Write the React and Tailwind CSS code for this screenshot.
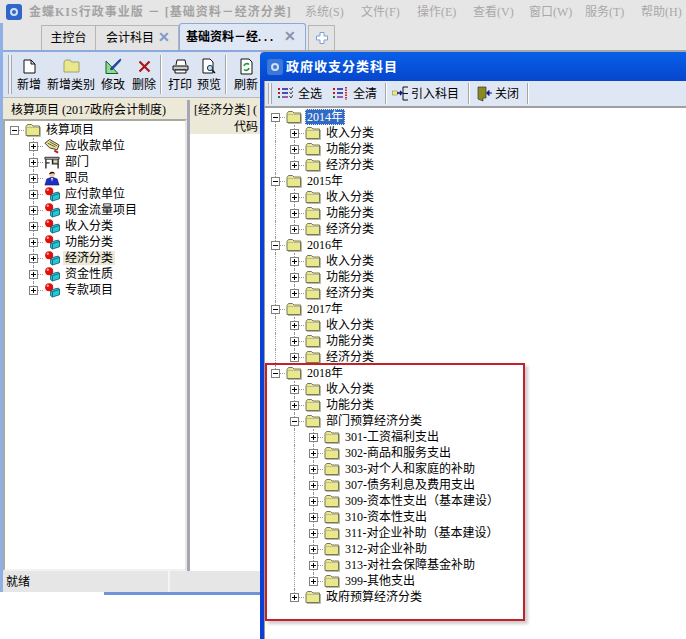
import React from "react";

const Folder = () => (
  <svg width="16" height="14" viewBox="0 0 16 14" className="shrink-0">
    <path d="M1 3.5 L2.5 1.5 H6.5 L8 3 H14.5 V12.5 H1 Z" fill="#e9e98c" stroke="#77775a" />
    <path d="M2 4.5 H14 M15.5 4 V13.5 H2" fill="none" stroke="#b9b9a8" />
  </svg>
);

const Ball = () => (
  <svg width="16" height="16" viewBox="0 0 17 16" className="shrink-0">
    <path d="M7 8 L15 6 L16.5 7 V13 L9 15.5 L7 14 Z" fill="#22c8dc" stroke="#0b4550" strokeWidth="0.8" />
    <path d="M7 8.5 L9 10 L16 7.5 M9 10 V15" fill="none" stroke="#0b4550" strokeWidth="0.7" />
    <circle cx="5.5" cy="5" r="4.3" fill="#e01010" />
    <circle cx="4" cy="3.5" r="1.3" fill="#ff9a9a" />
  </svg>
);

const Hand = () => (
  <svg width="16" height="16" viewBox="0 0 17 16" className="shrink-0">
    <path d="M1 5 L6 1 L16 7 L14 12 L6 10 Z" fill="#efe08c" stroke="#333" />
    <path d="M4 5 L12 9 M6 3.5 L14 8" stroke="#555" fill="none" />
    <path d="M11 13 L15 15" stroke="#c01818" strokeWidth="2" />
  </svg>
);

const Desk = () => (
  <svg width="16" height="16" viewBox="0 0 17 16" className="shrink-0">
    <path d="M1 3 H16 V5 H1 Z" fill="#d8d8d8" stroke="#222" />
    <path d="M2 5 V15 M15 5 V15 M9 5 V10 H15 M2 9 H6" fill="none" stroke="#222" strokeWidth="1.4" />
    <rect x="10" y="6" width="4" height="3" fill="#f1e9a8" stroke="#555" strokeWidth="0.5" />
  </svg>
);

const Person = () => (
  <svg width="16" height="16" viewBox="0 0 17 16" className="shrink-0">
    <path d="M1 15.5 L3 9 L7 7.5 H10 L14 9 L16 15.5 Z" fill="#1c2fc0" stroke="#0a1260" strokeWidth="0.6" />
    <path d="M7.5 8 L8.5 12 L9.5 8 Z" fill="#fff" />
    <circle cx="8.5" cy="4" r="3" fill="#f2c9a0" />
    <path d="M5.5 4 C5.5 0.5 11.5 0.5 11.5 3.5 L9 3 Z" fill="#111" />
  </svg>
);

const icons = { folder: <Folder />, ball: <Ball />, hand: <Hand />, desk: <Desk />, person: <Person /> };

// one tree line: guide columns, expander box, icon, label
const Row = ({ guides = [], box = "+", line = "full", icon = "folder", label, selected, hover }) => (
  <div className="flex h-4 items-center whitespace-nowrap">
    {guides.map((g, i) => (
      <div key={i} className="flex h-4 w-[19px] shrink-0 justify-center">
        {g && <div className="h-full border-l border-dotted border-[#999]" />}
      </div>
    ))}
    <div className="relative flex h-4 w-[19px] shrink-0 items-center justify-center">
      {line === "full" && <div className="absolute left-[9px] top-0 h-4 border-l border-dotted border-[#999]" />}
      {line === "first" && <div className="absolute left-[9px] top-2 h-2 border-l border-dotted border-[#999]" />}
      {line === "last" && <div className="absolute left-[9px] top-0 h-2 border-l border-dotted border-[#999]" />}
      <div className="absolute left-[9px] top-2 w-[10px] border-t border-dotted border-[#999]" />
      <div className="relative flex h-[9px] w-[9px] items-center justify-center border border-[#808080] bg-white">
        <div className="absolute h-px w-[5px] bg-black" />
        {box === "+" && <div className="absolute h-[5px] w-px bg-black" />}
      </div>
    </div>
    <div className="ml-px relative">{icons[icon]}</div>
    <span
      className={
        "text-[12px] leading-[14px] " +
        (selected
          ? "ml-[3px] border border-dotted border-[#dfe6f4] bg-[#316ac5] px-px text-white"
          : hover
          ? "ml-[3px] bg-[#ece9d8] px-[2px] text-black"
          : "ml-[5px] text-black")
      }
    >
      {label}
    </span>
  </div>
);

const ToolBtn = ({ label, className, children }) => (
  <div className={"flex flex-col items-center " + className}>
    <div className="flex h-[22px] items-center justify-center">{children}</div>
    <span className="text-[12px] leading-[16px] text-black whitespace-nowrap">{label}</span>
  </div>
);

const Grip = () => (
  <div className="h-full w-[4px] shrink-0 border-x border-[#a8a8a8] bg-[#eef1f8]" />
);

const Divider = ({ className = "" }) => (
  <div className={"w-[2px] shrink-0 self-stretch border-l border-r border-l-[#a5a5a5] border-r-white " + className} />
);

const ListIcon = ({ clear }) => (
  <svg width="15" height="13" viewBox="0 0 15 13">
    <path d="M0 2 H2 M0 6 H2" stroke="#c01818" strokeWidth="2" />
    <path d="M0 10 H2" stroke="#108030" strokeWidth="2" />
    <path d="M4 2 H10 M4 6 H10" stroke="#1a1a90" strokeWidth="1.4" />
    <path d="M4 10 H10" stroke="#802090" strokeWidth="1.4" />
    {clear ? (
      <path d="M13 0 V13" stroke="#c03030" strokeWidth="2" strokeDasharray="1.5 1" />
    ) : (
      <path d="M11.5 1 L13 3 L15 0 M11.5 5 L13 7 L15 4 M11.5 9 L13 11 L15 8" fill="none" stroke="#444" />
    )}
  </svg>
);

const leftTree = [
  ["hand", "应收款单位"],
  ["desk", "部门"],
  ["person", "职员"],
  ["ball", "应付款单位"],
  ["ball", "现金流量项目"],
  ["ball", "收入分类"],
  ["ball", "功能分类"],
  ["ball", "经济分类"],
  ["ball", "资金性质"],
  ["ball", "专款项目"],
];

const years = ["2014年", "2015年", "2016年", "2017年"];
const subs = ["收入分类", "功能分类", "经济分类"];
const budget = [
  "301-工资福利支出",
  "302-商品和服务支出",
  "303-对个人和家庭的补助",
  "307-债务利息及费用支出",
  "309-资本性支出（基本建设）",
  "310-资本性支出",
  "311-对企业补助（基本建设）",
  "312-对企业补助",
  "313-对社会保障基金补助",
  "399-其他支出",
];
const menus = ["系统(S)", "文件(F)", "操作(E)", "查看(V)", "窗口(W)", "服务(T)", "帮助(H)"];

export default function App() {
  return (
    <div className="relative h-[639px] w-[686px] overflow-hidden bg-white font-['Liberation_Serif','Noto_Sans_CJK_SC',serif]">
      {/* main window */}
      <div className="flex h-[592px] flex-col">
        <div className="flex h-[23px] shrink-0 items-center bg-[#e6e6e6] pl-[6px]">
          <div className="flex h-4 w-4 shrink-0 items-center justify-center rounded-[3px] bg-[#2f66c8]">
            <div className="h-2 w-2 rounded-full border-2 border-[#cfe0f5]" />
          </div>
          <span className="ml-[7px] w-[276px] shrink-0 whitespace-nowrap text-[12px] font-bold tracking-[1px] text-[#a3a3a3]">
            金蝶KIS行政事业版 － [基础资料－经济分类]
          </span>
          {menus.map((m) => (
            <span key={m} className="w-[56px] shrink-0 whitespace-nowrap text-[12px] text-[#a9a9a9]">
              {m}
            </span>
          ))}
        </div>

        <div className="flex min-h-0 flex-1 flex-col border-l-[3px] border-[#8fb0e4]">
          {/* tabs */}
          <div className="flex h-[29px] shrink-0 items-end border-b-[2px] border-[#8aa9dd] bg-[#e6e6e6] pl-[38px]">
            <div className="flex h-[25px] w-[55px] items-center justify-center border border-b-0 border-[#b5b5b5] bg-[#e4e4e4] text-[12px]">
              主控台
            </div>
            <div className="flex h-[25px] w-[83px] items-center border border-b-0 border-l-0 border-[#b5b5b5] bg-[#e4e4e4] pl-[10px] text-[12px]">
              会计科目
              <span className="ml-[4px] text-[14px] font-bold leading-none text-[#7d9ac8]">✕</span>
            </div>
            <div className="flex h-[27px] w-[127px] items-center rounded-t-[3px] border border-b-0 border-[#8aa9dd] bg-[#dfe6f4] pl-[6px] text-[12px] font-bold">
              基础资料－经. . .
              <span className="ml-[11px] text-[14px] leading-none text-[#8a93a8]">✕</span>
            </div>
            <div className="ml-[2px] flex h-[25px] w-[27px] items-center justify-center border border-b-0 border-[#b5b5b5] bg-[#e4e4e4]">
              <svg width="12" height="12" viewBox="0 0 12 12">
                <path d="M4 0.5 H8 V4 H11.5 V8 H8 V11.5 H4 V8 H0.5 V4 H4 Z" fill="#fff" stroke="#7f9fd4" />
              </svg>
            </div>
          </div>

          {/* toolbar */}
          <div className="flex h-[46px] shrink-0 items-stretch border-b border-[#b9b9b9] bg-[#dde5f3] py-[3px] pl-[5px]">
            <Grip />
            <ToolBtn label="新增" className="ml-[5px]">
              <svg width="13" height="15" viewBox="0 0 13 15">
                <path d="M1 1 H8 L12 5 V14 H1 Z M8 1 V5 H12" fill="#fff" stroke="#111" />
              </svg>
            </ToolBtn>
            <ToolBtn label="新增类别" className="ml-[6px]">
              <svg width="17" height="14" viewBox="0 0 17 14">
                <path d="M1 3 L2.5 1 H7 L8.5 3 H16 V13 H1 Z" fill="#e9e98c" stroke="#a0a070" />
              </svg>
            </ToolBtn>
            <ToolBtn label="修改" className="ml-[6px]">
              <svg width="17" height="17" viewBox="0 0 17 17">
                <path d="M1 15.5 V3 L13 15.5 Z" fill="#8fdc8f" stroke="#135c2c" />
                <path d="M5 11 L14 2 L16 1 L15 3.5 L7 12 Z" fill="#1a4fb0" stroke="#0a2a70" strokeWidth="0.6" />
              </svg>
            </ToolBtn>
            <ToolBtn label="删除" className="ml-[7px]">
              <svg width="13" height="13" viewBox="0 0 13 13">
                <path d="M1.5 1.5 L11.5 11.5 M11.5 1.5 L1.5 11.5" stroke="#a81818" strokeWidth="2.2" />
              </svg>
            </ToolBtn>
            <Divider className="ml-[4px]" />
            <ToolBtn label="打印" className="ml-[6px]">
              <svg width="17" height="15" viewBox="0 0 17 15">
                <path d="M4 6 L5 1 H13 L14 6" fill="#fff" stroke="#111" />
                <path d="M1 7 H16 V11 H1 Z" fill="#c8c8c8" stroke="#111" />
                <path d="M3 11 H14 V14 H3 Z" fill="#fff" stroke="#111" />
              </svg>
            </ToolBtn>
            <ToolBtn label="预览" className="ml-[5px]">
              <svg width="14" height="16" viewBox="0 0 14 16">
                <path d="M1 1 H8 L11 4 V15 H1 Z" fill="#fff" stroke="#111" />
                <circle cx="8" cy="10" r="2.6" fill="#bfe0e8" stroke="#135" />
                <path d="M10 12 L13 15" stroke="#111" strokeWidth="1.5" />
              </svg>
            </ToolBtn>
            <Divider className="ml-[4px]" />
            <ToolBtn label="刷新" className="ml-[7px]">
              <svg width="13" height="17" viewBox="0 0 13 17">
                <path d="M1 1 H9 L12 4 V16 H1 Z" fill="#fff" stroke="#111" />
                <path d="M4 8 A3 3 0 0 1 9 6.5 M9 10 A3 3 0 0 1 4 11.5" fill="none" stroke="#1c9a2c" strokeWidth="1.6" />
              </svg>
            </ToolBtn>
          </div>

          {/* body */}
          <div className="flex min-h-0 flex-1 bg-[#ece9d8] pt-[2px]">
            <div className="flex w-[184px] shrink-0 flex-col">
              <div className="flex h-[19px] shrink-0 items-center pl-[8px] text-[12px]">核算项目 (2017政府会计制度)</div>
              <div className="flex-1 border-2 border-[#a9a9a0] border-r-[#e8e8e0] border-b-[#f2f2ee] bg-white pt-[1px]">
                <Row box="-" line="none" label="核算项目" />
                {leftTree.map(([icon, label], i) => (
                  <Row
                    key={label}
                    guides={[false]}
                    line={i === leftTree.length - 1 ? "last" : "full"}
                    icon={icon}
                    label={label}
                    hover={label === "经济分类"}
                  />
                ))}
              </div>
            </div>
            <div className="w-[3px] shrink-0 bg-[#a5a5b5]" />
            <div className="flex flex-1 flex-col">
              <div className="flex h-[19px] shrink-0 items-center pl-[4px] text-[12px] whitespace-nowrap">[经济分类] (</div>
              <div className="flex flex-1 flex-col bg-white">
                <div className="flex h-[15px] shrink-0 items-center bg-[#ece9d8] pl-[44px] text-[12px]">代码</div>
              </div>
            </div>
          </div>

          {/* status bar */}
          <div className="flex h-[21px] shrink-0 items-center bg-[#e6e6e6] text-[12px]">
            <div className="flex h-full w-[167px] items-center border-r-2 border-[#f4f4f4] pl-[3px]">就绪</div>
          </div>
        </div>
      </div>
      <div className="ml-[104px] h-[3px] bg-[#6f93d6]" />

      {/* dialog window */}
      <div className="absolute left-[260px] top-[50px] flex h-[589px] w-[426px] flex-col rounded-tl-[6px] border-t-2 border-[#a8a8a8] bg-[#0a3fd8]">
        <div className="flex h-[29px] shrink-0 items-center rounded-tl-[6px] bg-gradient-to-b from-[#0a5fe8] to-[#0646cc] pl-[7px]">
          <div className="flex h-4 w-4 items-center justify-center rounded-[3px] bg-[#3b78d8]">
            <div className="h-2 w-2 rounded-full border-2 border-[#cfe0f5]" />
          </div>
          <span className="ml-[3px] text-[13px] font-bold tracking-[1px] text-white">政府收支分类科目</span>
        </div>
        <div className="ml-[4px] flex min-h-0 flex-1 flex-col border-l border-[#9a9a9a] bg-white">
          <div className="flex h-[27px] shrink-0 items-center border-b-2 border-[#a0a0a0] bg-[#dfe6f4] py-[2px] pl-[3px] text-[12px]">
            <Grip />
            <div className="ml-[6px] flex items-center">
              <ListIcon />
              <span className="ml-[5px]">全选</span>
            </div>
            <div className="ml-[11px] flex items-center">
              <ListIcon clear />
              <span className="ml-[5px]">全清</span>
            </div>
            <Divider className="ml-[8px]" />
            <div className="ml-[5px] flex items-center">
              <svg width="17" height="15" viewBox="0 0 17 15">
                <rect x="0.5" y="5" width="5" height="4" fill="#f0f060" stroke="#777" strokeWidth="0.5" />
                <path d="M5 7 H9 M8 5 L10 7 L8 9" fill="none" stroke="#101080" strokeWidth="1.4" />
                <path d="M16 1 H11 V14 H16 M11 7.5 H16" fill="none" stroke="#111" />
              </svg>
              <span className="ml-[2px]">引入科目</span>
            </div>
            <Divider className="ml-[9px]" />
            <div className="ml-[7px] flex items-center">
              <svg width="15" height="16" viewBox="0 0 15 16">
                <path d="M1 1 H9 V12 H6 V15 L1 13 Z" fill="#8a8a20" stroke="#333" strokeWidth="0.7" />
                <path d="M15 7 H12 M12 4.5 L9.5 7 L12 9.5 Z" fill="#101080" stroke="#101080" />
              </svg>
              <span className="ml-[3px]">关闭</span>
            </div>
            <Divider className="ml-[8px]" />
          </div>

          <div className="min-h-0 flex-1 overflow-hidden pl-[1px] pt-px">
            {years.map((y, i) => (
              <React.Fragment key={y}>
                <Row box="-" line={i === 0 ? "first" : "full"} label={y} selected={i === 0} />
                {subs.map((s, j) => (
                  <Row key={s} guides={[true]} line={j === 2 ? "last" : "full"} label={s} />
                ))}
              </React.Fragment>
            ))}
            <Row box="-" line="last" label="2018年" />
            <Row guides={[false]} label="收入分类" />
            <Row guides={[false]} label="功能分类" />
            <Row guides={[false]} box="-" label="部门预算经济分类" />
            {budget.map((b, i) => (
              <Row key={b} guides={[false, true]} line={i === budget.length - 1 ? "last" : "full"} label={b} />
            ))}
            <Row guides={[false]} line="last" label="政府预算经济分类" />
          </div>
        </div>
      </div>

      {/* red annotation box */}
      <div className="absolute left-[265px] top-[363px] h-[258px] w-[260px] border-2 border-[#c4202a] shadow-[3px_3px_3px_rgba(0,0,0,0.2)]" />
    </div>
  );
}
